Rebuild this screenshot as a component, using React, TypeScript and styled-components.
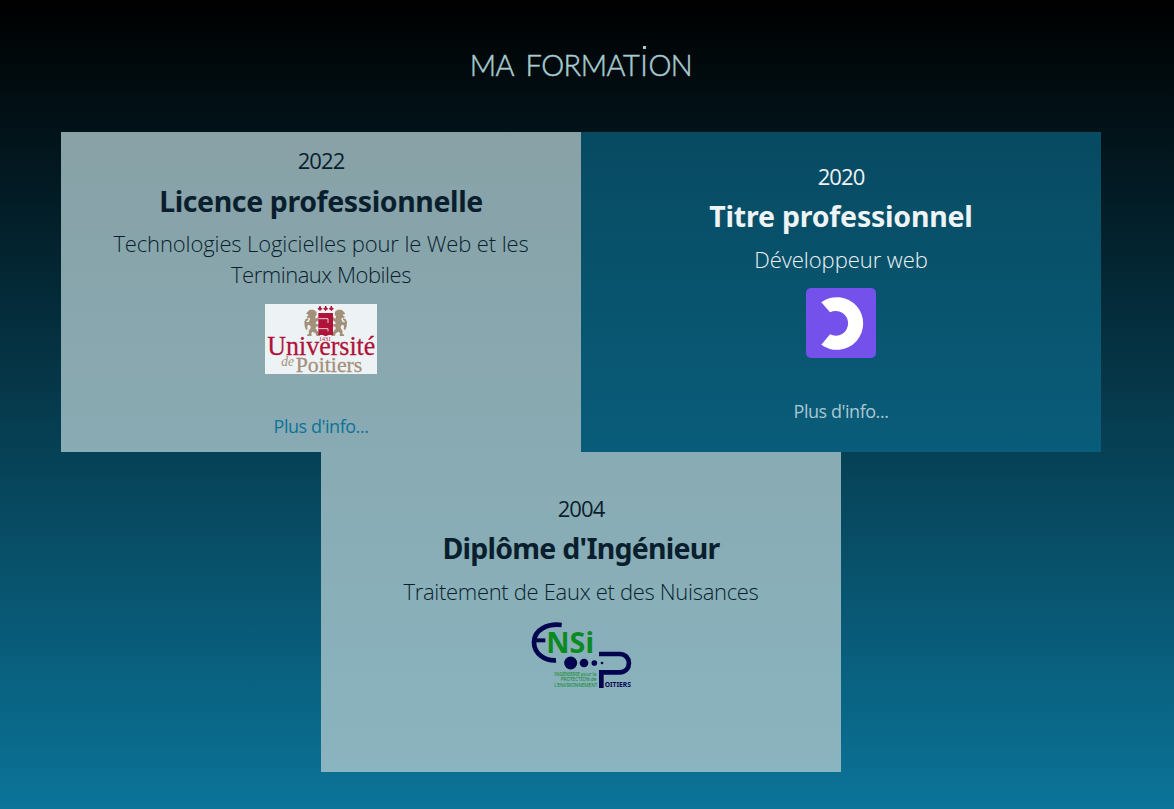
import React from "react";
import styled, { createGlobalStyle } from "styled-components";

const GlobalStyle = createGlobalStyle`
  * { box-sizing: border-box; }
  body { margin: 0; font-family: "Open Sans", "Noto Sans", sans-serif; }
`;

const Page = styled.main`
  min-height: 809px;
  padding: 45px 73px 37px 61px;
  background: linear-gradient(180deg, #000000 0%, #0b7499 100%);
`;

const Heading = styled.h1`
  height: 87px;
  margin: 0;
  text-align: center;
  white-space: nowrap;
  color: #a9cad1;
  font: 300 29px/40px Lato, "Open Sans", sans-serif;
  letter-spacing: -0.5px;
  word-spacing: 5px;
  -webkit-text-stroke: 0.5px currentColor;
`;

const DottedLetter = styled.span`
  position: relative;
  margin: 0 1px 0 1px;

  &::before {
    content: "";
    position: absolute;
    top: -1px;
    left: 50%;
    width: 3px;
    height: 3px;
    margin-left: -1px;
    background: currentColor;
  }
`;

const Board = styled.section`
  display: flex;
  flex-wrap: wrap;
  justify-content: center;
  width: 1040px;
`;

const Card = styled.article<{ $dark?: boolean }>`
  display: flex;
  flex-direction: column;
  align-items: center;
  justify-content: center;
  width: 520px;
  height: 320px;
  text-align: center;
  color: ${(p) => (p.$dark ? "#eef4f5" : "#0a1f2e")};
  background: ${(p) => (p.$dark ? "rgba(11, 112, 146, 0.6)" : "rgba(170, 198, 203, 0.8)")};
`;

const Year = styled.p`
  margin: 0 0 2.6px;
  font-size: 22px;
  line-height: 31px;
  letter-spacing: -0.9px;
`;

const Title = styled.h2<{ $spacing: number }>`
  margin: 0 0 5.5px;
  font: 700 28.5px/44px "Noto Sans", sans-serif;
  letter-spacing: ${(p) => p.$spacing}px;
`;

const Subject = styled.p`
  margin: 0 0 13.5px;
  font-size: 22px;
  font-weight: 300;
  line-height: 31px;
`;

const Line = styled.span<{ $spacing: number }>`
  display: block;
  white-space: nowrap;
  letter-spacing: ${(p) => p.$spacing}px;
`;

const Logo = styled.svg`
  display: block;
  flex: none;
  overflow: visible;
`;

const More = styled.a<{ $dark?: boolean }>`
  height: 25.8px;
  margin-top: 39.6px;
  font-size: 18px;
  line-height: 26px;
  letter-spacing: -0.46px;
  color: ${(p) => (p.$dark ? "#a9c8d1" : "#0b7499")};
`;

const Spacer = styled.div`
  flex: none;
  height: 41.4px;
`;

const Lion = () => (
  <path
    fill="#a3907b"
    d="M157 51l7-7 12 0 8 6 1 10-4 4 1 7 7-4 3 3-1 6-8 5-1 5 10 3 0 5-9 1-1 6 5 7 8 8 0 7-10 0-4-9-9-4-3 5 1 8-13 0-1-4 6-3-1-8 6-9-1-7-6-3-3 4 1 10-5 2-4-11-1-14 4-8 8-2 0 5-5 3 0 4 6-1 4-8-1-4-8-1-1-4 5-2-1-4-6-1z"
  />
);

const UniversityLogo = () => (
  <Logo width="112" height="70" viewBox="30 27 336 210" fontFamily="Liberation Serif, serif">
    <path fill="#edf3f4" d="M30 27h336v210H30z" />
    <Lion />
    <g transform="translate(424 0) scale(-1 1)">
      <Lion />
    </g>
    <path fill="#b0123a" d="M190 54h44v66h-13l-9 4-9-4h-13z" />
    <path fill="none" stroke="#edf3f4" strokeWidth="2.500" d="M190 71h29v13M190 101h29v8" />
    <g fill="#b0123a">
      {[195, 212, 229].map((x) => (
        <path key={x} d={`M${x - 8} 41l5-3 1-5h4l1 5 5 3-5 4-2-1 1 4h-4l1-4-2 1z`} />
      ))}
    </g>
    <text x="192" y="138" fontSize="17" textLength="36" lengthAdjust="spacingAndGlyphs" fill="#b0123a">1431</text>
    <text
      x="37"
      y="181"
      fontSize="81"
      textLength="324"
      lengthAdjust="spacingAndGlyphs"
      fill="#b0123a"
      stroke="#b0123a"
      strokeWidth="0.8"
    >
      Université
    </text>
    <text x="79" y="214" fontSize="41" fontStyle="italic" textLength="38" lengthAdjust="spacingAndGlyphs" fill="#a3907b">de</text>
    <text
      x="122"
      y="230"
      fontSize="66"
      textLength="200"
      lengthAdjust="spacingAndGlyphs"
      fill="#a3907b"
      stroke="#a3907b"
      strokeWidth="0.8"
    >
      Poitiers
    </text>
  </Logo>
);

const SchoolLogo = () => (
  <Logo width="70" height="70" viewBox="0 0 70 70">
    <rect width="70" height="70" rx="5" fill="#7451eb" />
    <path
      fill="#fff"
      d="M15.300 14.300A26.300 26.300 0 1 1 15.300 56.700L24 46.300A12.400 12.400 0 1 0 24 24.300Z"
    />
  </Logo>
);

const EngineeringLogo = () => (
  <Logo width="104" height="70" viewBox="27 24 312 210" fontFamily="Noto Sans, sans-serif">
    <g fill="none" stroke="#04044f">
      <path strokeWidth="14" d="M125 39C84 34 43 52 42 90C42 126 75 147 108 145" />
      <path strokeWidth="12" d="M42 85h34" />
      <path strokeWidth="14" d="M237 126h62C336 126 336 181 299 181H244V228" />
    </g>
    <g fill="#04044f">
      <circle cx="152" cy="153" r="19.500" />
      <circle cx="192" cy="153" r="13" />
      <circle cx="223" cy="153" r="8.500" />
      <circle cx="246" cy="153" r="4" />
      <text x="254" y="226" fontSize="20" fontWeight="700" textLength="79" lengthAdjust="spacingAndGlyphs">OITIERS</text>
    </g>
    <g fill="#0b8a22">
      <text x="79" y="124" fontSize="85" fontWeight="700" textLength="143" lengthAdjust="spacingAndGlyphs">NSi</text>
      <g fontSize="14.500">
        <text x="103" y="191" textLength="126" lengthAdjust="spacingAndGlyphs">INGÉNIERIE pour la</text>
        <text x="122" y="208" textLength="107" lengthAdjust="spacingAndGlyphs">PROTECTION de</text>
        <text x="103" y="226" textLength="129" lengthAdjust="spacingAndGlyphs">L'ENVIRONNEMENT</text>
      </g>
    </g>
  </Logo>
);

export default function App() {
  return (
    <>
      <GlobalStyle />
      <Page>
        <Heading>
          MA FORMAT<DottedLetter>I</DottedLetter>ON
        </Heading>
        <Board>
          <Card>
            <Year>2022</Year>
            <Title $spacing={-0.4}>Licence professionnelle</Title>
            <Subject>
              <Line $spacing={-0.12}>Technologies Logicielles pour le Web et les</Line>
              <Line $spacing={-0.48}>Terminaux Mobiles</Line>
            </Subject>
            <UniversityLogo />
            <More>Plus d'info...</More>
          </Card>
          <Card $dark>
            <Year>2020</Year>
            <Title $spacing={-0.22}>Titre professionnel</Title>
            <Subject>
              <Line $spacing={-0.05}>Développeur web</Line>
            </Subject>
            <SchoolLogo />
            <More $dark>Plus d'info...</More>
          </Card>
          <Card>
            <Year>2004</Year>
            <Title $spacing={-0.75}>Diplôme d'Ingénieur</Title>
            <Subject>
              <Line $spacing={-0.31}>Traitement de Eaux et des Nuisances</Line>
            </Subject>
            <EngineeringLogo />
            <Spacer />
          </Card>
        </Board>
      </Page>
    </>
  );
}
